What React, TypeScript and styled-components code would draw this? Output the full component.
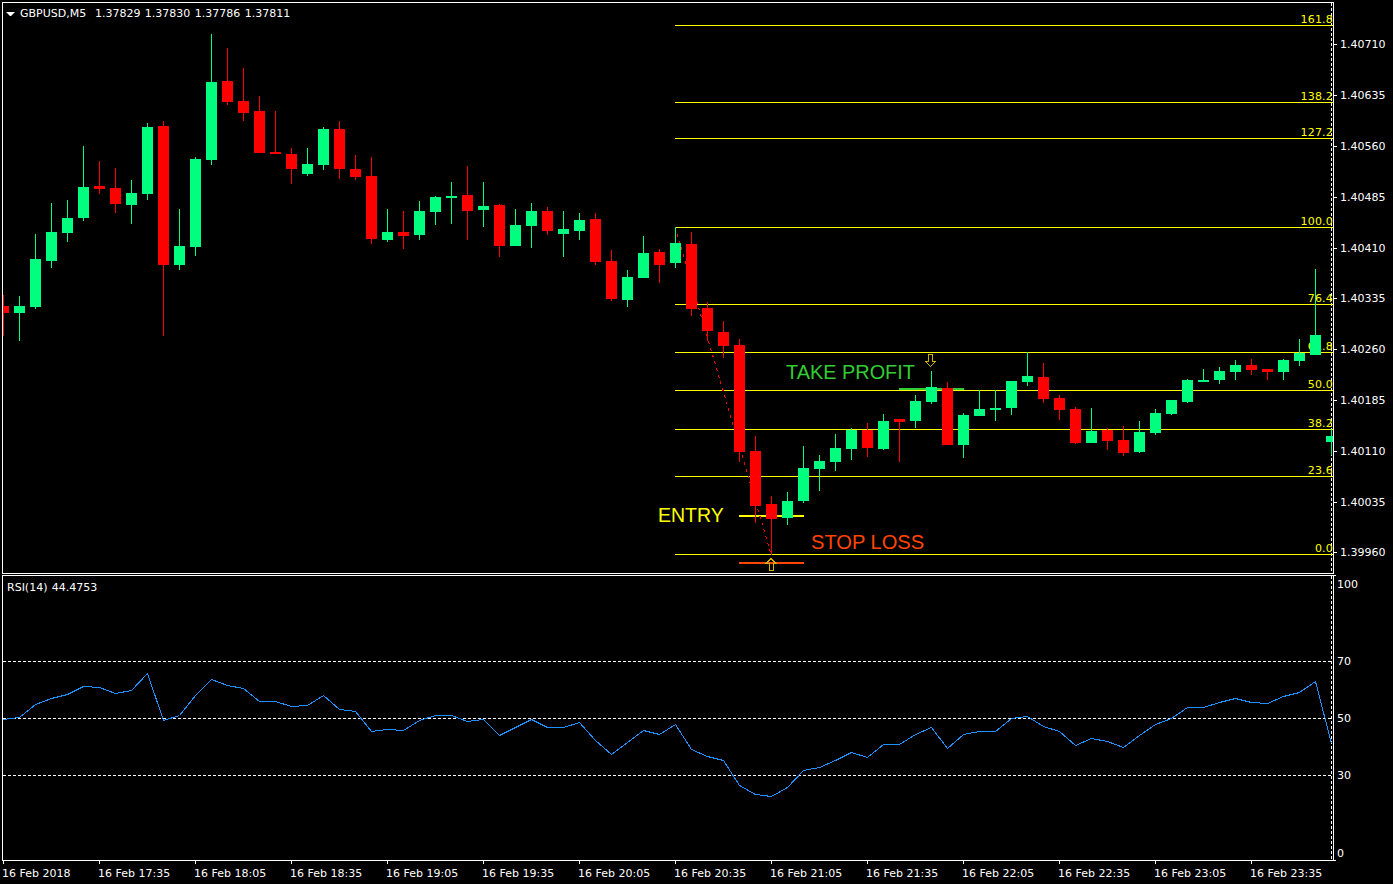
import React from "react";
import styled, { createGlobalStyle } from "styled-components";

const Global = createGlobalStyle`
  html, body { margin: 0; padding: 0; background: #000; }
`;

const UI_FONT = `"DejaVu Sans", "Liberation Sans", sans-serif`;

const Terminal = styled.div`
  width: 1393px;
  height: 884px;
  box-sizing: border-box;
  padding: 2px 0 0 2px;
  display: flex;
  flex-direction: column;
  background: #000;
  overflow: hidden;
  font-family: ${UI_FONT};
  font-size: 11px;
  color: #fff;
`;

const PaneRow = styled.section<{ $height: number; $gap?: number }>`
  display: flex;
  height: ${(p) => p.$height}px;
  margin-top: ${(p) => p.$gap ?? 0}px;
  flex: none;
`;

const Plot = styled.div`
  position: relative;
  width: 1332px;
  height: 100%;
  box-sizing: border-box;
  border: 1px solid #fff;
  flex: none;
`;

const PlotCanvas = styled.svg`
  display: block;
  width: 1330px;
  height: 100%;
`;

const Legend = styled.div<{ $left: number; $top: number }>`
  position: absolute;
  left: ${(p) => p.$left}px;
  top: ${(p) => p.$top}px;
  display: flex;
  align-items: center;
  gap: 5px;
  line-height: 14px;
  white-space: pre;
  word-spacing: 0.9px;
`;

const MenuCaret = styled.svg`
  width: 9px;
  height: 4px;
  display: block;
  flex: none;
`;

const Scale = styled.div`
  position: relative;
  flex: 1;
`;

const ScaleMark = styled.div<{ $y: number; $gap: number; $inset?: number }>`
  position: absolute;
  left: ${(p) => p.$inset ?? 0}px;
  top: ${(p) => p.$y - 7}px;
  height: 14px;
  line-height: 14px;
  display: flex;
  align-items: center;
  gap: ${(p) => p.$gap}px;
`;

const ScaleTick = styled.i<{ $shift: number }>`
  display: block;
  width: 3px;
  height: 1px;
  margin-top: ${(p) => p.$shift}px;
  background: #fff;
  flex: none;
`;

const EdgeTick = styled.i<{ $y: number }>`
  position: absolute;
  left: 0;
  top: ${(p) => p.$y}px;
  width: 2px;
  height: 1px;
  background: #fff;
`;

const TimeAxis = styled.footer`
  display: flex;
  padding-left: 1px;
  flex: none;
`;

const TimeCell = styled.div`
  width: 96px;
  flex: none;
  display: flex;
  flex-direction: column;
`;

const TimeTick = styled.i`
  display: block;
  width: 1px;
  height: 3px;
  background: #fff;
`;

const TimeLabel = styled.span`
  margin: 3px 0 0 -1px;
  line-height: 14px;
  white-space: nowrap;
`;

const FibLabel = styled.text`
  font-family: ${UI_FONT};
  font-size: 11px;
  letter-spacing: 0.2px;
  fill: #ffff00;
  text-anchor: end;
`;

const Caption = styled.text<{ $color: string; $size: number }>`
  font-family: "Liberation Sans", Arial, sans-serif;
  font-size: ${(p) => p.$size}px;
  fill: ${(p) => p.$color};
`;

// kind (1 = up, 0 = down), wick top, wick bottom, body top, body bottom
const CANDLES: [number, number, number, number, number][] = [
  [0, 295, 336, 306, 313], [1, 296, 341, 306, 313], [1, 234, 309, 259, 307], [1, 203, 268, 232, 261],
  [1, 200, 242, 218, 233], [1, 146, 221, 187, 218], [0, 161, 194, 186, 189], [0, 168, 213, 188, 204],
  [1, 180, 224, 193, 205], [1, 123, 200, 127, 194], [0, 121, 336, 126, 265], [1, 209, 270, 246, 265],
  [1, 157, 256, 159, 247], [1, 34, 165, 82, 160], [0, 48, 105, 81, 102], [0, 68, 121, 101, 113],
  [0, 96, 153, 111, 153], [0, 111, 154, 152, 154], [0, 148, 184, 154, 169], [1, 148, 176, 164, 174],
  [1, 127, 170, 129, 165], [0, 121, 179, 129, 169], [0, 155, 180, 169, 177], [0, 157, 244, 176, 239],
  [1, 209, 242, 232, 240], [0, 211, 249, 232, 236], [1, 201, 240, 211, 235], [1, 196, 225, 197, 212],
  [1, 182, 224, 196, 198], [0, 166, 240, 195, 211], [1, 182, 227, 206, 210], [0, 204, 257, 205, 246],
  [1, 209, 246, 225, 246], [1, 203, 248, 211, 226], [0, 207, 235, 211, 231], [1, 211, 257, 229, 234],
  [1, 213, 240, 220, 231], [0, 213, 265, 219, 262], [0, 250, 301, 261, 299], [1, 270, 307, 277, 300],
  [1, 236, 278, 253, 278], [0, 249, 283, 252, 265], [1, 227, 268, 243, 263], [0, 232, 316, 244, 309],
  [0, 302, 341, 308, 331], [0, 321, 358, 332, 346], [0, 339, 462, 345, 452], [0, 436, 523, 451, 506],
  [0, 496, 555, 504, 519], [1, 492, 525, 501, 518], [1, 446, 503, 468, 501], [1, 455, 491, 461, 469],
  [1, 434, 471, 448, 462], [1, 428, 460, 430, 449], [0, 423, 457, 430, 448], [1, 414, 450, 421, 449],
  [0, 419, 462, 419, 422], [1, 395, 428, 401, 421], [1, 371, 404, 387, 402], [0, 382, 445, 388, 445],
  [1, 413, 458, 415, 445], [1, 390, 416, 409, 416], [1, 390, 421, 408, 410], [1, 381, 415, 381, 408],
  [1, 352, 386, 376, 382], [0, 363, 403, 377, 399], [0, 395, 420, 398, 410], [0, 407, 444, 409, 443],
  [1, 408, 443, 431, 443], [0, 428, 450, 430, 441], [0, 426, 456, 440, 453], [1, 421, 453, 432, 452],
  [1, 409, 435, 413, 433], [1, 400, 415, 400, 414], [1, 379, 403, 380, 402], [1, 369, 382, 380, 382],
  [1, 367, 384, 371, 380], [1, 360, 380, 365, 372], [0, 359, 375, 365, 370], [0, 369, 380, 369, 372],
  [1, 359, 380, 360, 372], [1, 339, 366, 353, 361], [1, 269, 355, 335, 355], [1, 429, 455, 436, 442],
];

const RSI = [
  719, 717, 704, 698, 694, 686, 687, 693, 690, 673, 720, 715, 695, 679, 685, 688, 701, 701, 706, 705, 695,
  709, 711, 731, 729, 730, 720, 715, 715, 721, 719, 735, 727, 719, 727, 727, 722, 740, 754, 742, 730, 734,
  724, 749, 756, 760, 785, 794, 796, 787, 770, 767, 760, 752, 757, 744, 744, 734, 727, 748, 734, 731, 731,
  718, 716, 726, 731, 745, 738, 741, 747, 735, 724, 718, 707, 707, 702, 698, 702, 703, 696, 692, 681, 743,
];

const FIB: [string, number][] = [
  ["161.8", 25], ["138.2", 102], ["127.2", 138], ["100.0", 227], ["76.4", 304],
  ["61.8", 352], ["50.0", 390], ["38.2", 429], ["23.6", 476], ["0.0", 554],
];

const PRICES: [string, number, number][] = [
  ["1.40710", 44, 0], ["1.40635", 95, 0], ["1.40560", 146, 0], ["1.40485", 197, 0], ["1.40410", 248, 0],
  ["1.40335", 298, 1], ["1.40260", 349, 1], ["1.40185", 400, 0], ["1.40110", 451, 0], ["1.40035", 502, 0],
  ["1.39960", 552, 0],
];

const RSI_SCALE: [string, number][] = [["100", 585], ["70", 662], ["50", 719], ["30", 776], ["0", 854]];
const RSI_LEVELS = [661, 718, 775];

const TIMES = [
  "16 Feb 2018", "16 Feb 17:35", "16 Feb 18:05", "16 Feb 18:35", "16 Feb 19:05", "16 Feb 19:35", "16 Feb 20:05",
  "16 Feb 20:35", "16 Feb 21:05", "16 Feb 21:35", "16 Feb 22:05", "16 Feb 22:35", "16 Feb 23:05", "16 Feb 23:35",
];

const UP = "#00ff7f";
const DOWN = "#ff0000";
const YELLOW = "#ffff00";
const ORANGE = "#ff4500";
const GREEN = "#32cd32";

const xOf = (i: number) => 3 + 16 * i;

function ArrowMark({ d }: { d: string }) {
  return <path d={d} fill="none" stroke="#d0b400" strokeWidth={1} shapeRendering="crispEdges" />;
}

function PriceChart() {
  return (
    <PlotCanvas viewBox="3 3 1330 570" preserveAspectRatio="xMinYMin slice">
      <line x1={1331.5} y1={3} x2={1331.5} y2={573} stroke="#fff" strokeDasharray="3 2" shapeRendering="crispEdges" />
      {FIB.map(([label, y]) => (
        <FibLabel key={label} x={1333} y={y - 2}>{label}</FibLabel>
      ))}
      {FIB.map(([label, y]) => (
        <rect key={label} x={675} y={y} width={658} height={1} fill={YELLOW} shapeRendering="crispEdges" />
      ))}
      <rect x={739} y={515} width={65} height={2} fill={YELLOW} shapeRendering="crispEdges" />
      <rect x={739} y={562} width={65} height={2} fill={ORANGE} shapeRendering="crispEdges" />
      <rect x={899} y={388} width={65} height={2} fill={GREEN} shapeRendering="crispEdges" />
      <line x1={675} y1={227} x2={771} y2={554} stroke={DOWN} strokeDasharray="3 4" shapeRendering="crispEdges" />
      <Caption x={658} y={522} $color={YELLOW} $size={19.5}>ENTRY</Caption>
      <Caption x={786} y={379} $color={GREEN} $size={19.9}>TAKE PROFIT</Caption>
      <Caption x={811} y={549} $color={ORANGE} $size={20.1}>STOP LOSS</Caption>
      <g shapeRendering="crispEdges">
        {CANDLES.map(([kind, wt, wb, bt, bb], i) => {
          const x = xOf(i);
          const color = kind ? UP : DOWN;
          return (
            <g key={i} fill={color}>
              <rect x={x} y={wt} width={1} height={wb - wt} />
              <rect x={x - 5} y={bt} width={11} height={bb - bt} />
            </g>
          );
        })}
      </g>
      <ArrowMark d="M928.5 354.5h4v7h3l-5 5-5-5h3z" />
      <ArrowMark d="M771 558.5l5 5h-3v6.5h-4v-6.5h-3z" />
    </PlotCanvas>
  );
}

function RsiChart() {
  const points = RSI.map((y, i) => `${xOf(i) + 0.5},${y + 0.5}`).join(" ");
  return (
    <PlotCanvas viewBox="3 576 1330 284" preserveAspectRatio="xMinYMin slice">
      <line x1={1331.5} y1={576} x2={1331.5} y2={860} stroke="#fff" strokeDasharray="3 2" shapeRendering="crispEdges" />
      {RSI_LEVELS.map((y) => (
        <line key={y} x1={3} y1={y + 0.5} x2={1331} y2={y + 0.5} stroke="#fff" strokeDasharray="3 2" shapeRendering="crispEdges" />
      ))}
      <polyline points={points} fill="none" stroke="#1e90ff" strokeWidth={1} shapeRendering="crispEdges" />
    </PlotCanvas>
  );
}

export default function App() {
  return (
    <>
      <Global />
      <Terminal>
        <PaneRow $height={572}>
          <Plot>
            <PriceChart />
            <Legend $left={3} $top={4}>
              <MenuCaret viewBox="0 0 9 4">
                <path d="M0 0h9L4.5 4.5z" fill="#fff" />
              </MenuCaret>
              <span>GBPUSD,M5  1.37829 1.37830 1.37786 1.37811</span>
            </Legend>
          </Plot>
          <Scale>
            {PRICES.map(([label, y, shift]) => (
              <ScaleMark key={label} $y={y - 1} $gap={3}>
                <ScaleTick $shift={shift - 2} />
                <span>{label}</span>
              </ScaleMark>
            ))}
          </Scale>
        </PaneRow>
        <PaneRow $height={286} $gap={1}>
          <Plot>
            <RsiChart />
            <Legend $left={4} $top={5}>
              <span>RSI(14) 44.4753</span>
            </Legend>
          </Plot>
          <Scale>
            <EdgeTick $y={0} />
            <EdgeTick $y={285} />
            {RSI_SCALE.map(([label, y]) => (
              <ScaleMark key={label} $y={y - 575} $gap={0} $inset={3}>
                <span>{label}</span>
              </ScaleMark>
            ))}
          </Scale>
        </PaneRow>
        <TimeAxis>
          {TIMES.map((t) => (
            <TimeCell key={t}>
              <TimeTick />
              <TimeLabel>{t}</TimeLabel>
            </TimeCell>
          ))}
        </TimeAxis>
      </Terminal>
    </>
  );
}
